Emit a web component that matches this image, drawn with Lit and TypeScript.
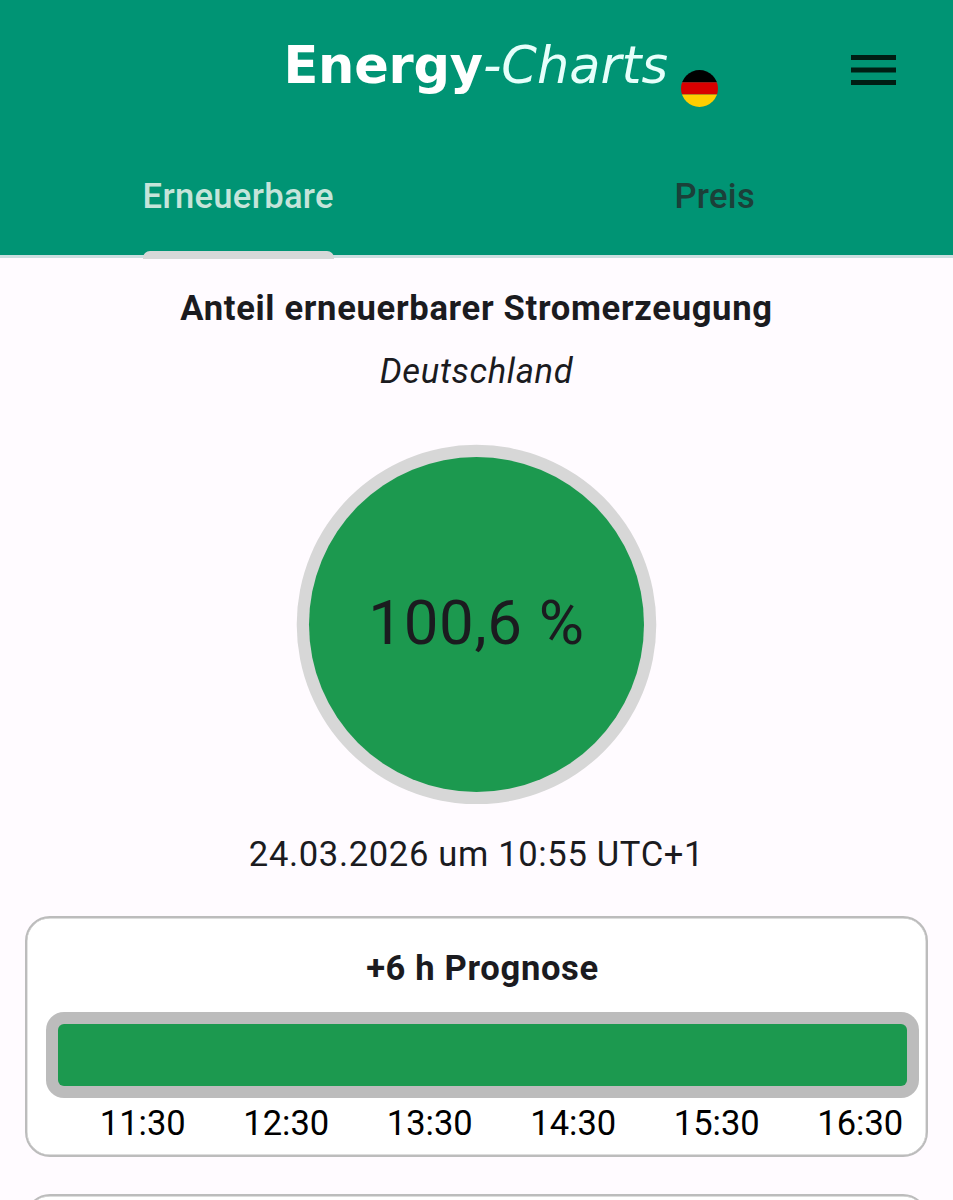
import { LitElement, html, css } from "lit";
import { customElement, property, state } from "lit/decorators.js";

@customElement("app-header")
class AppHeader extends LitElement {
  static styles = css`
    :host {
      display: block;
      height: 153px;
    }
    .bar {
      display: grid;
      grid-template-columns: 1fr auto 1fr;
      height: 153px;
    }
    .brand {
      grid-column: 2;
      display: flex;
      padding-top: 36px;
      margin-left: 48px;
      height: 60px;
      line-height: 60px;
      font-family: "DejaVu Sans", sans-serif;
      font-size: 51px;
      color: #fff;
      white-space: nowrap;
    }
    .brand b {
      font-weight: 700;
      letter-spacing: -0.2px;
    }
    .brand i {
      font-style: oblique;
      color: #e6fffb;
    }
    .flag {
      width: 37px;
      height: 37px;
      margin: 34px 0 0 12.5px;
    }
    .menu {
      justify-self: end;
      width: 45px;
      height: 30px;
      margin: 55px 57px 0 0;
    }
  `;
  render() {
    return html`
      <div class="bar">
        <div class="brand">
          <b>Energy</b><i>-Charts</i>
          <svg class="flag" viewBox="0 0 37 37">
            <clipPath id="round"><circle cx="18.5" cy="18.5" r="18.5" /></clipPath>
            <g clip-path="url(#round)">
              <rect width="37" height="12.3" fill="#000" />
              <rect y="12.3" width="37" height="12.2" fill="#d80000" />
              <rect y="24.5" width="37" height="12.5" fill="#ffce00" />
            </g>
          </svg>
        </div>
        <svg class="menu" viewBox="0 0 45 30">
          <path d="M0 0H45V5H0ZM0 12.5H45V17.5H0ZM0 25H45V30H0Z" fill="#001e14" />
        </svg>
      </div>
    `;
  }
}

@customElement("app-tabs")
class AppTabs extends LitElement {
  static styles = css`
    :host {
      display: block;
      border-bottom: 3px solid #cbdfe0;
    }
    .tabs {
      display: grid;
      grid-template-columns: 1fr 1fr;
      height: 102px;
    }
    .tab {
      display: flex;
      justify-content: center;
    }
    .label {
      position: relative;
      height: 102px;
      line-height: 86px;
      font-size: 34.6px;
      font-weight: 500;
      letter-spacing: 0.3px;
      color: #1b4039;
    }
    .active {
      color: #c5e4da;
    }
    .active::after {
      content: "";
      position: absolute;
      left: 0;
      right: 0;
      bottom: -4px;
      height: 8px;
      border-radius: 7px 7px 0 0;
      background: #d6d8d8;
    }
  `;
  @property({ attribute: false }) tabs: string[] = [];
  @state() private selected = 0;
  render() {
    return html`
      <div class="tabs">
        ${this.tabs.map(
          (t, i) => html`<div class="tab" @click=${() => (this.selected = i)}>
            <span class="label ${i === this.selected ? "active" : ""}">${t}</span>
          </div>`
        )}
      </div>
    `;
  }
}

@customElement("forecast-card")
class ForecastCard extends LitElement {
  static styles = css`
    :host {
      display: block;
      box-sizing: border-box;
      height: 241px;
      margin: 0 25px;
      padding: 26px 7px 0 19px;
      border: 2px solid #bcbcbc;
      border-radius: 25px;
      background: #fff;
      box-shadow: inset 0 0 0 0.4px #bcbcbc;
    }
    .title {
      height: 48px;
      line-height: 48px;
      text-align: center;
      font-weight: 700;
      font-size: 34.6px;
      letter-spacing: 0.65px;
    }
    .meter {
      box-sizing: border-box;
      height: 86px;
      margin-top: 20px;
      padding: 12px;
      border-radius: 18px;
      background: #bcbcbc;
    }
    .fill {
      height: 100%;
      border-radius: 6px;
      background: #1c994f;
    }
    .times {
      display: grid;
      grid-template-columns: repeat(6, 143.5px);
      justify-content: end;
      margin: 1px -13px 0 0;
      line-height: 48px;
      font-size: 34.5px;
      text-align: center;
      color: #000;
    }
  `;
  @property() heading = "";
  @property({ attribute: false }) times: string[] = [];
  render() {
    return html`
      <div class="title">${this.heading}</div>
      <div class="meter"><div class="fill"></div></div>
      <div class="times">${this.times.map((t) => html`<span>${t}</span>`)}</div>
    `;
  }
}

@customElement("app-root")
class AppRoot extends LitElement {
  static styles = css`
    :host {
      display: block;
      height: 1200px;
      overflow: hidden;
      background: #fffbff;
      color: #1b1b1f;
      font-family: Roboto, sans-serif;
      font-size: 34.6px;
    }
    .top {
      background: #009474;
    }
    .share {
      display: flex;
      flex-direction: column;
      align-items: center;
      padding-top: 26px;
      line-height: 48px;
    }
    .title {
      font-weight: 700;
      letter-spacing: 0.68px;
    }
    .country {
      margin-top: 15px;
      font-style: italic;
      letter-spacing: 0.65px;
    }
    .gauge {
      display: grid;
      place-items: center;
      width: 361px;
      height: 360px;
      margin-top: 49px;
    }
    .gauge > * {
      grid-area: 1 / 1;
    }
    .disc {
      width: 361px;
      height: 360px;
    }
    .value {
      padding-bottom: 3px;
      font-size: 61.8px;
      letter-spacing: 0.7px;
    }
    .stamp {
      margin: 26px 0 38px;
      letter-spacing: 0.65px;
    }
    .next {
      margin-top: 37px;
    }
  `;
  render() {
    return html`
      <div class="top">
        <app-header></app-header>
        <app-tabs .tabs=${["Erneuerbare", "Preis"]}></app-tabs>
      </div>
      <div class="share">
        <div class="title">Anteil erneuerbarer Stromerzeugung</div>
        <div class="country">Deutschland</div>
        <div class="gauge">
          <svg class="disc" viewBox="0 0 361 360">
            <circle cx="180.5" cy="180.5" r="179.8" fill="#d7d7d7" />
            <circle cx="180.5" cy="180.5" r="167.5" fill="#1c994f" />
          </svg>
          <span class="value">100,6 %</span>
        </div>
        <div class="stamp">24.03.2026 um 10:55 UTC+1</div>
      </div>
      <forecast-card
        heading="+6 h Prognose"
        .times=${["11:30", "12:30", "13:30", "14:30", "15:30", "16:30"]}
      ></forecast-card>
      <forecast-card class="next"></forecast-card>
    `;
  }
}
